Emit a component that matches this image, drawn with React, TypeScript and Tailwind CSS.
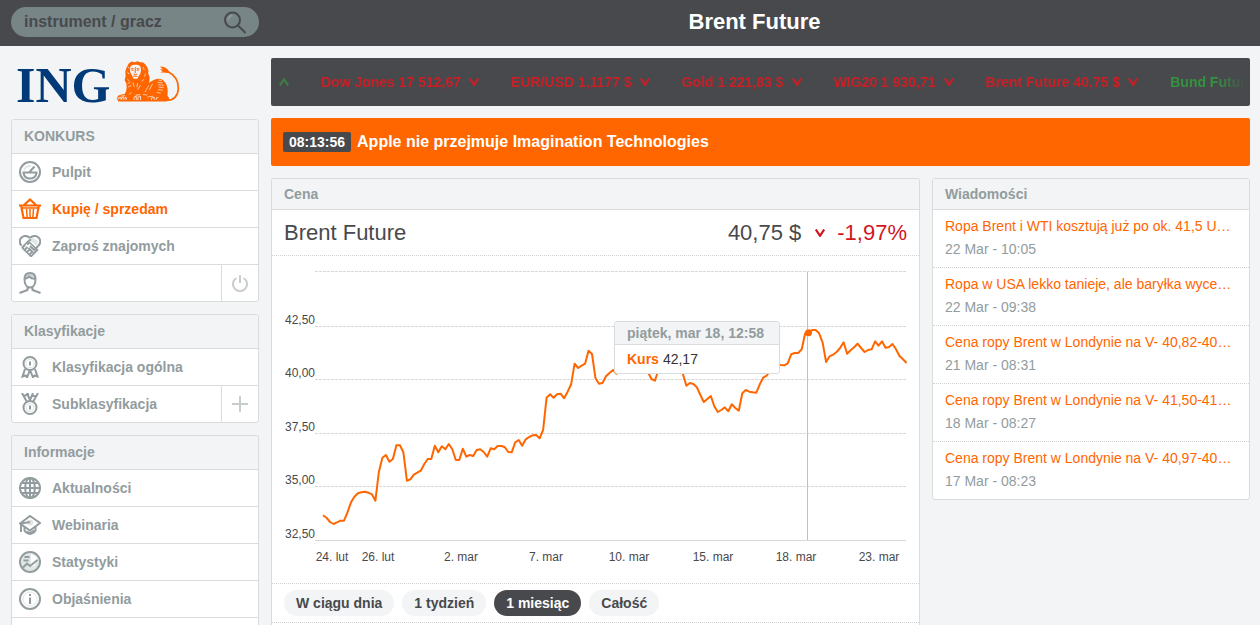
import type { ReactNode } from "react";
import clsx from "clsx";

function Icon({ children }: { children: ReactNode }) {
  return (
    <svg
      className="w-[22px] h-[22px] shrink-0"
      viewBox="0 0 22 22"
      fill="none"
      stroke="currentColor"
      strokeWidth="2"
      aria-hidden="true"
    >
      {children}
    </svg>
  );
}

const DashboardIcon = () => (
  <Icon>
    <circle cx="11" cy="11" r="10" />
    <path d="M5 9a7 7 0 0 1 7-4" stroke="#e3e6e7" />
    <path d="M3.5 11.5h15M4.5 12c.6 3.5 3.2 5.5 6.5 5.500s5.9-2 6.5-5.5M10.5 11L15.5 5.5" />
  </Icon>
);

const BasketIcon = () => (
  <Icon>
    <path d="M5 7L11 1.500 17 7M0 7.500h22" strokeWidth="2.2" />
    <path d="M2.200 8l2.300 12h13l2.300-12" strokeWidth="2.200" />
    <path d="M7.500 11l.7 9M11 11v9M14.500 11l-.7 9" strokeWidth="1.500" />
    <path d="M2 10h18M4 20h14" strokeWidth="1.500" />
  </Icon>
);

const HandshakeIcon = () => (
  <Icon>
    <path d="M9 5l5-2 5 3-1 5-5-4-4 3z" fill="#e3e6e7" stroke="none" />
    <path
      d="M11 3C8.500.3 4.500.3 2.300 2.700.2 5.200.6 8.500 2.500 10.700M11 3c2.500-2.700 6.500-2.700 8.700-.3 2.100 2.500 1.700 5.800-.2 8L16 14.500"
      strokeWidth="2"
    />
    <path
      d="M3 12.500l7-7 2-1M3 12.500l9 9 6.500-6.500-8-7.500-2.500 2"
      strokeWidth="1.700"
    />
    <path
      d="M3 13l3-3M5 15.500l3.500-3.500M7.500 17.500l3.500-3.500M10 20l3-3M11 11l5.500 5M9.500 13l5 5"
      strokeWidth="2"
    />
  </Icon>
);

const PersonIcon = () => (
  <Icon>
    <path d="M6 8c1-4 8-5 10-1l-1-4-4-2-4 1z" fill="#cfd4d5" stroke="none" />
    <path
      d="M5.500 7c0-4 2.200-6 5.500-6s5.500 2 5.500 6c0 5-2.200 8.500-5.500 8.500S5.500 12 5.500 7zM5.500 7c2.500 0 3.500-1 4.500-2.500 1.500 1.500 4 2.300 6.500 2.500M8.500 15v3L.5 21M13.500 15v3l8 3"
      strokeWidth="2"
    />
  </Icon>
);

const RosetteIcon = () => (
  <Icon>
    <path d="M6 13l-2.500 7.500 3-1 1.500 2L11 14l3 7.500 1.500-2 3 1L16 13" />
    <circle cx="11" cy="7.500" r="6.500" fill="#fff" />
    <circle cx="11" cy="7.500" r="4.200" stroke="#dfe2e3" strokeWidth="1" />
    <path d="M11 5.500v4" />
  </Icon>
);

const MedalIcon = () => (
  <Icon>
    <path d="M3 0l5 9M8 0l2.500 6M19 0l-5 9M14 0l-3.500 8M5 3l5-2M13 2l4 2" />
    <circle cx="11" cy="14.500" r="6.500" fill="#fff" />
    <circle cx="11" cy="14.500" r="4" stroke="#dfe2e3" strokeWidth="1" />
    <path d="M11 12.500v4" />
  </Icon>
);

const GlobeIcon = () => (
  <Icon>
    <circle cx="11" cy="11" r="10" />
    <ellipse cx="11" cy="11" rx="4.800" ry="10" />
    <path d="M11 1v20M1 11h20M3 6h16M3 16h16" />
  </Icon>
);

const GraduationIcon = () => (
  <Icon>
    <circle cx="11" cy="8.500" r="3" fill="#dfe2e3" stroke="none" />
    <path d="M1 9.500L11 2l10 7-10 7.500L1 9.500zM2 18V9.500l9-1.500" />
    <path d="M5.500 12.500v4c3 4.500 8 4.500 11 0v-4" />
    <path d="M8 17.500l3 1.500 4-2.500" strokeWidth="1.500" />
  </Icon>
);

const StatsIcon = () => (
  <Icon>
    <circle cx="11" cy="11" r="9" fill="#e3e6e7" stroke="none" />
    <path d="M12 2.500l6 4-2 8-4 1z" fill="#fff" stroke="none" />
    <circle cx="11" cy="11" r="10" />
    <path d="M5.500 6h5M4.500 9.500h5M4 16.500l4-4 3 2.500 7.500-6" />
  </Icon>
);

const InfoIcon = () => (
  <Icon>
    <circle cx="11" cy="11" r="10" />
    <circle cx="11" cy="11" r="7" stroke="#e3e6e7" strokeWidth="1" />
    <path d="M11 9.500V16M11 6v2" />
  </Icon>
);

const PowerIcon = () => (
  <svg className="w-4 h-[18px]" viewBox="0 0 16 18" fill="none" stroke="currentColor" strokeWidth="2">
    <path d="M8 1v8M4.500 4A7 7 0 1 0 11.500 4" />
  </svg>
);

const PlusIcon = () => (
  <svg className="w-4 h-4" viewBox="0 0 16 16" fill="none" stroke="currentColor" strokeWidth="2">
    <path d="M8 0v16M0 8h16" />
  </svg>
);

function Chevron({ up = false }: { up?: boolean }) {
  return (
    <svg className="w-2.5 h-2 shrink-0" viewBox="0 0 10 8" fill="none" stroke="currentColor" strokeWidth="2.2">
      <path d={up ? "M.8 7.5L5 1.200l4.200 6.300" : "M.8.5L5 6.800 9.200.5"} />
    </svg>
  );
}

function Logo() {
  return (
    <a href="#" aria-label="ING" className="flex items-end gap-[7px] h-[45px] ml-[5px]">
      <span className="font-['Liberation_Serif',serif] font-bold text-[50px] leading-[38px] h-[43px] pt-[6px] text-[#003a78]">
        ING
      </span>
      <svg className="w-[63px] h-[41px] mb-px" viewBox="356 184 190 122" fill="none">
        <path
          d="M392 190l8-5 9 2 9-3 8 3 9 1 7 6 5 8 4 10-1 9 4 9 0 14-2 6c8-6 18-12 28-13 12-1 22 8 26 20 4 10 3 24 2 31l5 6 0 8-8 3H360l-4-8 3-9 10-4 10-1c6-8 7-20 5-32l-5-10 3-12-1-14 4-13z"
          fill="#ff6600"
        />
        <path
          d="M506 301c22 2 34-14 35-34 1-24-12-42-32-52"
          stroke="#ff6600"
          strokeWidth="5"
        />
        <path d="M485 200l13 1 10 6 8 12-9 0-10-1-11 0 8-4-9-5 9-1z" fill="#ff6600" />
        <path
          d="M397 199c8-6 22-6 29 0 4 8 3 18-2 27l-7 11-11 0-6-12c-5-8-7-18-3-26z"
          fill="#f3f4f6"
        />
        <path
          d="M397 207l9-1M415 206l9 1M400 211h6M415 211h7M411 202v18M406 222l5 3 6-3M404 229h14M394 225l6 9M426 224l-5 10"
          stroke="#ff6600"
          strokeWidth="3"
        />
        <path
          d="M388 200l5 6M387 215l5 8M387 237l6 7M388 251l8-4M389 262l10-5M435 202l3 9M442 220l-3 10M438 238l-8 7M404 248l4 14M418 250l-2 12M427 256l-9 14M452 257l-12 20M463 252l-9 18M481 241l10 1M479 248l15 1M480 255l18 1M481 262l16 1M480 270l15 1M476 278l12 2M400 278l-8 6M434 284l13 2M447 292l18-3"
          stroke="#f3f4f6"
          strokeWidth="2"
        />
        <path
          d="M361 299v-5l5-2v7M370 300v-6l5-2v8M380 300v-6l4-1v7M407 301v-8l7-4v12M419 301v-9l8-2v11M460 301v-6l8-3v8M474 300v-5l7-2M412 286l14-1M368 289l12-1"
          stroke="#f3f4f6"
          strokeWidth="2.500"
        />
      </svg>
    </a>
  );
}

function Panel({ title, className, children }: { title: string; className?: string; children: ReactNode }) {
  return (
    <section className={clsx("border border-[#d9dcdd] rounded-[3px] bg-white overflow-hidden", className)}>
      <h2 className="h-[31px] px-3 flex items-center bg-[#f2f4f5] border-b border-[#d9dcdd] text-sm font-bold text-[#929c9e]">
        {title}
      </h2>
      {children}
    </section>
  );
}

type MenuItem = {
  icon: ReactNode;
  label: string;
  active?: boolean;
  action?: { label: string; icon: ReactNode };
};

const MENUS: { title: string; items: MenuItem[]; open?: boolean }[] = [
  {
    title: "KONKURS",
    items: [
      { icon: <DashboardIcon />, label: "Pulpit" },
      { icon: <BasketIcon />, label: "Kupię / sprzedam", active: true },
      { icon: <HandshakeIcon />, label: "Zaproś znajomych" },
      { icon: <PersonIcon />, label: "", action: { label: "Wyloguj", icon: <PowerIcon /> } },
    ],
  },
  {
    title: "Klasyfikacje",
    items: [
      { icon: <RosetteIcon />, label: "Klasyfikacja ogólna" },
      { icon: <MedalIcon />, label: "Subklasyfikacja", action: { label: "Dodaj", icon: <PlusIcon /> } },
    ],
  },
  {
    title: "Informacje",
    open: true,
    items: [
      { icon: <GlobeIcon />, label: "Aktualności" },
      { icon: <GraduationIcon />, label: "Webinaria" },
      { icon: <StatsIcon />, label: "Statystyki" },
      { icon: <InfoIcon />, label: "Objaśnienia" },
    ],
  },
];

function Menu({ title, items, open }: { title: string; items: MenuItem[]; open?: boolean }) {
  return (
    <nav
      className={clsx(
        "border border-[#d9dcdd] rounded-[3px] bg-white overflow-hidden",
        open && "flex-1 border-b-0 rounded-b-none",
      )}
    >
      <h2 className="h-[33px] px-3 pb-0.5 flex items-center bg-[#f2f4f5] text-sm font-bold text-[#929c9e]">
        {title}
      </h2>
      <ul className={clsx(open && "border-b border-[#d9dcdd]")}>
        {items.map((item) => (
          <li key={item.label} className="flex h-[37px] border-t border-[#d9dcdd]">
            <a
              href="#"
              aria-label={item.label || "Profil"}
              className={clsx(
                "flex-1 flex items-center gap-[11px] pl-[7px] text-sm font-bold",
                item.active ? "text-[#ff6600]" : "text-[#929c9e]",
              )}
            >
              {item.icon}
              {item.label}
            </a>
            {item.action && (
              <button
                type="button"
                aria-label={item.action.label}
                className="w-[37px] flex items-center justify-center border-l border-[#d9dcdd] text-[#c8cdce]"
              >
                {item.action.icon}
              </button>
            )}
          </li>
        ))}
      </ul>
    </nav>
  );
}

const QUOTES = [
  { text: "Dow Jones 17 512,67" },
  { text: "EUR/USD 1,1177 $" },
  { text: "Gold 1 221,83 $" },
  { text: "WIG20 1 930,71" },
  { text: "Brent Future 40,75 $" },
  { text: "Bund Future", up: true },
];

function Ticker() {
  return (
    <div className="h-12 pl-2 pr-1 flex items-center rounded-[2px] bg-[#48494c]">
      <div className="flex-1 w-0 flex items-center gap-8 overflow-hidden whitespace-nowrap text-sm font-bold mask-r-from-97%">
        <span className="text-[#3f7a47]">
          <Chevron up />
        </span>
        {QUOTES.map((q) => (
          <span
            key={q.text}
            className={clsx("flex items-center gap-2", q.up ? "text-[#349240]" : "text-[#c91f26]")}
          >
            {q.text}
            <Chevron up={q.up} />
          </span>
        ))}
      </div>
    </div>
  );
}

// line heights, in thirds of a pixel from the top of the chart
const SAMPLES = [
  781, 788, 801, 807, 802, 797, 797, 772, 742, 725, 715, 712, 710, 713, 718, 737, 650, 608, 600, 620,
  612, 571, 571, 592, 677, 673, 659, 653, 647, 627, 612, 612, 572, 592, 574, 583, 567, 583, 615, 615,
  581, 605, 600, 603, 585, 583, 591, 605, 580, 583, 573, 573, 576, 591, 592, 562, 555, 572, 553, 546,
  541, 540, 550, 525, 428, 418, 428, 418, 416, 430, 410, 388, 326, 339, 332, 326, 287, 297, 370, 386,
  384, 364, 354, 345, 356, 350, 340, 330, 325, 325, 330, 335, 340, 350, 372, 377, 345, 320,
  310, 305, 310, 320, 330, 357, 392, 384, 387, 397, 420, 441, 432, 423, 454, 471, 465, 457, 469, 448,
  459, 467, 415, 405, 410, 412, 413, 388, 368, 362, 345, 330, 328, 330, 331, 325, 298, 294, 294, 283,
  235, 233, 225, 225, 235, 262, 321, 304, 299, 291, 279, 262, 296, 286, 277, 266, 279, 291, 285, 283,
  259, 272, 259, 278, 276, 267, 283, 303, 313, 324,
];

const GRID = [15.5, 70.5, 123.5, 177.5, 230.5];

const PRICES = [
  { y: 68, text: "42,50" },
  { y: 121, text: "40,00" },
  { y: 175, text: "37,50" },
  { y: 228, text: "35,00" },
  { y: 282, text: "32,50" },
];

const DATES = [
  { x: 60, text: "24. lut" },
  { x: 106, text: "26. lut" },
  { x: 189, text: "2. mar" },
  { x: 274, text: "7. mar" },
  { x: 357, text: "10. mar" },
  { x: 441, text: "15. mar" },
  { x: 524, text: "18. mar" },
  { x: 607, text: "23. mar" },
];

function Chart() {
  const step = (634.5 - 51) / (SAMPLES.length - 1);
  const points = SAMPLES.map((v, i) => `${(51 + i * step).toFixed(1)},${(v / 3 - 1).toFixed(1)}`).join(" ");

  return (
    <div className="relative">
      <svg className="block w-full h-auto" viewBox="0 0 647 327" fill="none">
        {GRID.map((y) => (
          <path key={y} d={`M43 ${y}H634`} stroke="#d8d8d8" strokeDasharray="3 1" />
        ))}
        <path d="M43 284.500H634" stroke="#d8d8d8" />
        <path d="M535.500 16V284" stroke="#c0c0c0" />
        <polyline points={points} stroke="#ff6600" strokeWidth="2" strokeLinejoin="round" />
        <circle cx="536.500" cy="76.700" r="3.500" fill="#ff6600" />
        <g fill="#48494c" fontSize="12">
          {PRICES.map((p) => (
            <text key={p.text} x="43" y={p.y} textAnchor="end">
              {p.text}
            </text>
          ))}
          {DATES.map((d) => (
            <text key={d.text} x={d.x} y="305" textAnchor="middle">
              {d.text}
            </text>
          ))}
        </g>
      </svg>
      <div className="absolute left-[342px] top-[65px] w-[166px] rounded-[3px] border border-[#d9dcdd] bg-white text-sm overflow-hidden">
        <div className="h-[23px] px-3 flex items-center whitespace-nowrap bg-[#f2f4f5] border-b border-[#d9dcdd] font-bold text-[#929c9e]">
          piątek, mar 18, 12:58
        </div>
        <div className="h-7 px-3 flex items-center gap-1 text-[#333333]">
          <b className="text-[#ff6600]">Kurs</b>
          42,17
        </div>
      </div>
    </div>
  );
}

const RANGES = ["W ciągu dnia", "1 tydzień", "1 miesiąc", "Całość"];

const NEWS = [
  { title: "Ropa Brent i WTI kosztują już po ok. 41,5 U…", date: "22 Mar - 10:05" },
  { title: "Ropa w USA lekko tanieje, ale baryłka wyce…", date: "22 Mar - 09:38" },
  { title: "Cena ropy Brent w Londynie na V- 40,82-40…", date: "21 Mar - 08:31" },
  { title: "Cena ropy Brent w Londynie na V- 41,50-41…", date: "18 Mar - 08:27" },
  { title: "Cena ropy Brent w Londynie na V- 40,97-40…", date: "17 Mar - 08:23" },
];

export default function App() {
  return (
    <div className="h-screen overflow-hidden flex flex-col bg-[#f3f4f6] font-['Liberation_Sans',Arial,sans-serif] text-[#48494c]">
      <header className="h-[46px] shrink-0 flex items-center bg-[#48494c] pl-[11px] pr-2.5">
        <div className="relative w-[248px] -mt-0.5">
          <input
            type="text"
            aria-label="instrument / gracz"
            placeholder="instrument / gracz"
            className="block w-full h-[30px] rounded-full bg-[#778587] pl-[13px] pr-10 text-base font-bold placeholder:text-[#48494c] outline-none"
          />
          <svg
            className="absolute right-[13px] top-1 w-[22px] h-[23px]"
            viewBox="0 0 22 23"
            fill="none"
            stroke="#48494c"
            strokeWidth="2"
          >
            <circle cx="8.500" cy="9" r="7.500" />
            <path d="M4.500 9a4.500 4.500 0 0 1 4-4.500" stroke="#929c9e" strokeWidth="1.500" />
            <path d="M14 14.500l7.500 7.500" />
          </svg>
        </div>
        <h1 className="flex-1 -mt-1 text-center text-[22px] font-bold text-white">Brent Future</h1>
      </header>

      <div className="flex-1 flex gap-3 pl-[11px] pr-2.5 pt-3">
        <aside className="w-[248px] shrink-0 flex flex-col gap-3">
          <div className="h-[49px]">
            <Logo />
          </div>
          {MENUS.map((m) => (
            <Menu key={m.title} {...m} />
          ))}
        </aside>

        <main className="flex-1 min-w-0 flex flex-col gap-3">
          <Ticker />
          <div className="h-12 px-3 flex items-center gap-1.5 rounded-[2px] bg-[#ff6600] font-bold text-white">
            <time className="h-5 px-1.5 flex items-center rounded-[2px] bg-[#48494c] text-sm">08:13:56</time>
            <a href="#" className="text-base">
              Apple nie przejmuje Imagination Technologies
            </a>
          </div>

          <div className="flex-1 flex gap-3">
            <Panel title="Cena" className="flex-1 min-w-0 border-b-0 rounded-b-none">
              <div className="h-[46px] px-3 flex items-center border-b border-dotted border-[#cfd3d4] text-[22px]">
                <span className="flex-1">Brent Future</span>
                <span>40,75 $</span>
                <span className="flex items-center gap-3 ml-3.5 text-[#d2161e]">
                  <Chevron />
                  -1,97%
                </span>
              </div>
              <Chart />
              <div className="py-[6px] px-3 flex gap-2 border-y border-dotted border-[#cfd3d4]">
                {RANGES.map((r) => (
                  <button
                    key={r}
                    type="button"
                    className={clsx(
                      "h-[26px] px-3 rounded-full text-sm font-bold",
                      r === "1 miesiąc" ? "bg-[#48494c] text-white" : "bg-[#f2f4f5] text-[#48494c]",
                    )}
                  >
                    {r}
                  </button>
                ))}
              </div>
            </Panel>

            <Panel title="Wiadomości" className="w-[318px] shrink-0 self-start">
              <ul className="divide-y divide-dotted divide-[#cfd3d4]">
                {NEWS.map((n) => (
                  <li key={n.date} className="px-3 pt-[5px] pb-[6px] text-sm leading-[23px]">
                    <a href="#" className="block truncate text-[#ff6600]">
                      {n.title}
                    </a>
                    <p className="text-[#929c9e]">{n.date}</p>
                  </li>
                ))}
              </ul>
            </Panel>
          </div>
        </main>
      </div>
    </div>
  );
}
